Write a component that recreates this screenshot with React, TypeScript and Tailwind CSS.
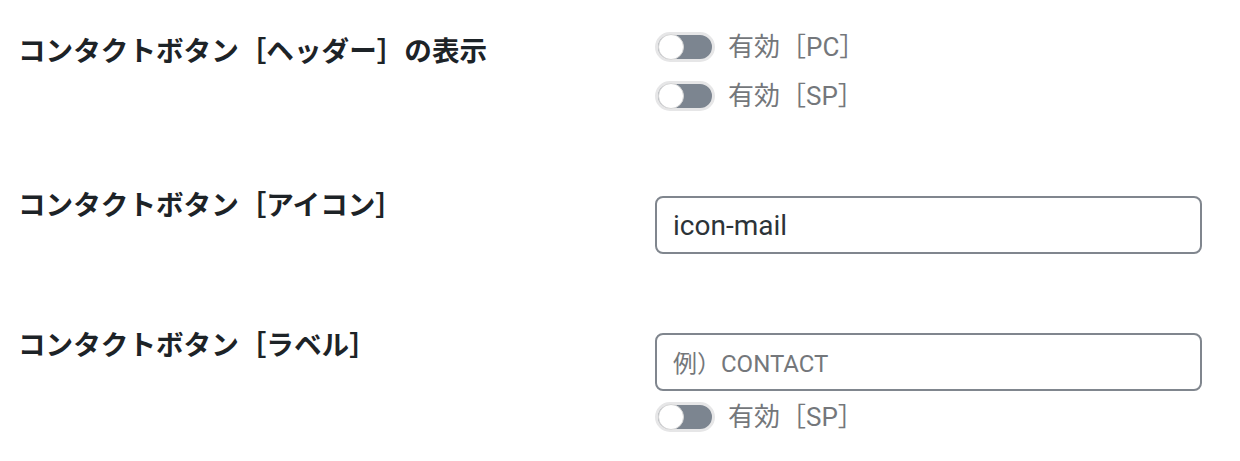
import React from 'react';

const jp = "font-['Noto_Sans_CJK_JP','Noto_Sans',sans-serif]";
const ui = "font-['Roboto','Noto_Sans_CJK_JP',sans-serif]";

function Toggle({ label }: { label: string }) {
  return (
    <label className="flex items-center h-[38px] gap-[13px] cursor-pointer">
      <span className="relative flex items-center w-[60px] h-[30px] rounded-full bg-[#7c8590] border-[3px] border-[#e6e6e7]">
        <span className="absolute left-0 top-1/2 -translate-y-1/2 w-[26px] h-[26px] rounded-full bg-white border border-[#d6d6d6]" />
      </span>
      <span className={`text-[26px] leading-none text-[#74777b] ${ui}`}>{label}</span>
    </label>
  );
}

function TextInput({ value, placeholder }: { value?: string; placeholder?: string }) {
  return (
    <input
      type="text"
      defaultValue={value}
      placeholder={placeholder}
      className={`w-full h-[58px] px-[16px] rounded-[8px] border-2 border-[#80868e] bg-white text-[28px] text-[#2c3338] placeholder:text-[24px] placeholder:text-[#74777b] outline-none ${ui}`}
    />
  );
}

export default function App() {
  return (
    <div className={`min-h-screen bg-white pt-[28px] pl-[18px] pr-[38px] ${jp}`}>
      {/* ヘッダー表示 */}
      <div className="grid grid-cols-[637px_1fr]">
        <div className="text-[27.6px] leading-[42px] font-bold text-[#1d2327]">
          コンタクトボタン［ヘッダー］の表示
        </div>
        <div className="flex flex-col gap-[11px]">
          <Toggle label="有効［PC］" />
          <Toggle label="有効［SP］" />
        </div>
      </div>

      {/* アイコン */}
      <div className="grid grid-cols-[637px_1fr] mt-[67px]">
        <div className="text-[27.6px] leading-[42px] font-bold text-[#1d2327]">
          コンタクトボタン［アイコン］
        </div>
        <div className="pt-[14px]">
          <TextInput value="icon-mail" />
        </div>
      </div>

      {/* ラベル */}
      <div className="grid grid-cols-[637px_1fr] mt-[68px]">
        <div className="text-[27.6px] leading-[42px] font-bold text-[#1d2327]">
          コンタクトボタン［ラベル］
        </div>
        <div className="pt-[11px] flex flex-col gap-[7px]">
          <TextInput placeholder="例）CONTACT" />
          <Toggle label="有効［SP］" />
        </div>
      </div>
    </div>
  );
}
